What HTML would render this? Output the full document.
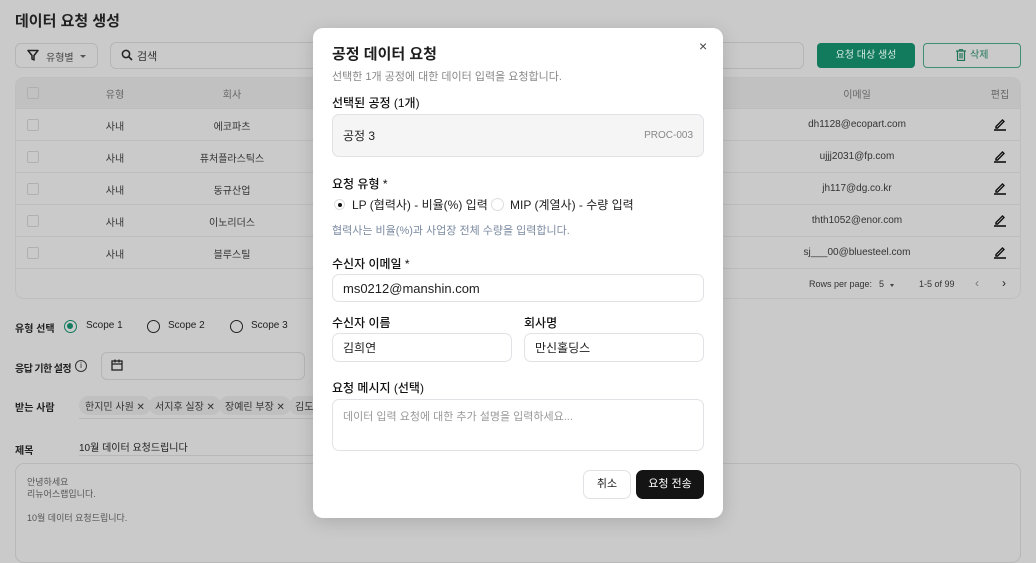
<!DOCTYPE html>
<html style="background:#cacaca"><head><meta charset="utf-8"><style>
*{box-sizing:border-box;margin:0;padding:0}
body{width:1036px;height:547px;overflow:hidden;background:#cacaca;font-family:"Liberation Sans","Noto Sans CJK KR",sans-serif;color:#1e1e1e;position:relative}
.a{position:absolute}
.t{white-space:nowrap}
.box{border:1px solid #b5b5b5;border-radius:6px}
.cb{width:12px;height:12px;border:1px solid #b0b0b0;border-radius:2px;position:absolute;left:27px}
.cell{position:absolute;font-size:10px;color:#333;transform:translateX(-50%);white-space:nowrap}
.rl{position:absolute;left:15px;width:1005px;height:1px;background:#bdbdbd}
.lbl{font-size:12px;font-weight:bold;color:#222}
.modal{position:absolute;left:313px;top:28px;width:410px;height:490px;background:#fff;border-radius:10px;box-shadow:0 4px 18px rgba(0,0,0,.15)}
.m{position:absolute;white-space:nowrap}
.inp{position:absolute;border:1px solid #e2e2e6;border-radius:7px;background:#fff;font-size:13px;padding-left:10px;display:flex;align-items:center}
.ml{font-size:12px;font-weight:500;color:#111}
.chip{position:absolute;top:396px;height:19px;background:#c0c0c0;border-radius:10px;font-size:10px;color:#333;padding:2px 6px;white-space:nowrap}
.pen{position:absolute;left:993px}
</style></head><body>
<div class="a t" style="left:15px;top:10px;font-size:15px;font-weight:bold;color:#222">데이터 요청 생성</div>
<div class="a box" style="left:15px;top:43px;width:83px;height:25px"></div>
<svg class="a" style="left:27px;top:49px" width="12" height="12" viewBox="0 0 12 12"><path d="M1 1.5h10L7 6.5V11L5 10V6.5z" fill="none" stroke="#222" stroke-width="1.5" stroke-linejoin="round"/></svg>
<div class="a t" style="left:46px;top:49px;font-size:10px;color:#444">유형별</div>
<div class="a" style="left:80px;top:55px;border:3px solid transparent;border-top:3px solid #555"></div>
<div class="a box" style="left:110px;top:42px;width:694px;height:27px"></div>
<svg class="a" style="left:121px;top:49px" width="12" height="12" viewBox="0 0 12 12"><circle cx="5" cy="5" r="3.6" fill="none" stroke="#222" stroke-width="1.5"/><path d="M7.7 7.7L11 11" stroke="#222" stroke-width="1.6"/></svg>
<div class="a t" style="left:137px;top:48px;font-size:11px;color:#333">검색</div>
<div class="a" style="left:817px;top:43px;width:98px;height:25px;background:#127a5d;border-radius:4px;color:#d8ebe3;font-size:10px;text-align:center;line-height:25px">요청 대상 생성</div>
<div class="a" style="left:923px;top:43px;width:98px;height:25px;border:1px solid #3f8f74;border-radius:4px;color:#1f7558;font-size:10px;line-height:23px;padding-left:46px">삭제</div>
<svg class="a" style="left:956px;top:49px" width="10" height="12" viewBox="0 0 10 12"><path d="M0 2h10M3.5 2V.7h3V2M1.5 2.5v9h7v-9M4 4v5.5M6 4v5.5" fill="none" stroke="#1f7558" stroke-width="1.2"/></svg>
<div class="a" style="left:15px;top:77px;width:1006px;height:222px;border:1px solid #bfbfbf;border-radius:9px;overflow:hidden">
<div style="height:31px;background:#c1c1c1"></div></div>
<div class="cb" style="top:87px"></div>
<div class="cell" style="left:115px;top:86px;color:#666">유형</div>
<div class="cell" style="left:232px;top:86px;color:#666">회사</div>
<div class="cell" style="left:857px;top:86px;color:#666">이메일</div>
<div class="cell" style="left:1000px;top:86px;color:#666">편집</div>
<div class="rl" style="top:108px"></div><div class="rl" style="top:140px"></div><div class="rl" style="top:172px"></div><div class="rl" style="top:204px"></div><div class="rl" style="top:236px"></div><div class="rl" style="top:268px"></div>
<div class="cb" style="top:119px"></div><div class="cell" style="left:115px;top:118px">사내</div><div class="cell" style="left:232px;top:118px">에코파츠</div><div class="cell" style="left:857px;top:119px">dh1128@ecopart.com</div>
<div class="cb" style="top:151px"></div><div class="cell" style="left:115px;top:150px">사내</div><div class="cell" style="left:232px;top:150px">퓨처플라스틱스</div><div class="cell" style="left:857px;top:151px">ujjj2031@fp.com</div>
<div class="cb" style="top:183px"></div><div class="cell" style="left:115px;top:182px">사내</div><div class="cell" style="left:232px;top:182px">동규산업</div><div class="cell" style="left:857px;top:183px">jh117@dg.co.kr</div>
<div class="cb" style="top:215px"></div><div class="cell" style="left:115px;top:214px">사내</div><div class="cell" style="left:232px;top:214px">이노리더스</div><div class="cell" style="left:857px;top:215px">thth1052@enor.com</div>
<div class="cb" style="top:247px"></div><div class="cell" style="left:115px;top:246px">사내</div><div class="cell" style="left:232px;top:246px">블루스틸</div><div class="cell" style="left:857px;top:247px">sj___00@bluesteel.com</div>
<svg class="pen" style="top:117px" width="14" height="14" viewBox="0 0 14 14"><path d="M3 9.5L9.5 3l1.5 1.5L4.5 11H3z" fill="none" stroke="#111" stroke-width="1.4"/><path d="M1 13h12" stroke="#111" stroke-width="1.6"/></svg>
<svg class="pen" style="top:149px" width="14" height="14" viewBox="0 0 14 14"><path d="M3 9.5L9.5 3l1.5 1.5L4.5 11H3z" fill="none" stroke="#111" stroke-width="1.4"/><path d="M1 13h12" stroke="#111" stroke-width="1.6"/></svg>
<svg class="pen" style="top:181px" width="14" height="14" viewBox="0 0 14 14"><path d="M3 9.5L9.5 3l1.5 1.5L4.5 11H3z" fill="none" stroke="#111" stroke-width="1.4"/><path d="M1 13h12" stroke="#111" stroke-width="1.6"/></svg>
<svg class="pen" style="top:213px" width="14" height="14" viewBox="0 0 14 14"><path d="M3 9.5L9.5 3l1.5 1.5L4.5 11H3z" fill="none" stroke="#111" stroke-width="1.4"/><path d="M1 13h12" stroke="#111" stroke-width="1.6"/></svg>
<svg class="pen" style="top:245px" width="14" height="14" viewBox="0 0 14 14"><path d="M3 9.5L9.5 3l1.5 1.5L4.5 11H3z" fill="none" stroke="#111" stroke-width="1.4"/><path d="M1 13h12" stroke="#111" stroke-width="1.6"/></svg>
<div class="a t" style="left:809px;top:279px;font-size:9px;color:#333">Rows per page:</div>
<div class="a t" style="left:879px;top:279px;font-size:9px;color:#333">5</div>
<div class="a" style="left:890px;top:284px;border:2.5px solid transparent;border-top:3px solid #444"></div>
<div class="a t" style="left:919px;top:279px;font-size:9px;color:#333">1-5 of 99</div>
<div class="a t" style="left:975px;top:276px;font-size:12px;color:#777">‹</div>
<div class="a t" style="left:1002px;top:276px;font-size:12px;color:#222">›</div>
<div class="a t lbl" style="left:15px;top:320px;font-size:10px">유형 선택</div>
<div class="a" style="left:64px;top:320px;width:13px;height:13px;border:1.5px solid #127a5d;border-radius:50%"><div style="margin:2px;width:6px;height:6px;border-radius:50%;background:#127a5d"></div></div>
<div class="a t" style="left:86px;top:320px;font-size:10px">Scope 1</div>
<div class="a" style="left:147px;top:320px;width:13px;height:13px;border:1.5px solid #222;border-radius:50%"></div>
<div class="a t" style="left:168px;top:320px;font-size:10px">Scope 2</div>
<div class="a" style="left:230px;top:320px;width:13px;height:13px;border:1.5px solid #222;border-radius:50%"></div>
<div class="a t" style="left:251px;top:320px;font-size:10px">Scope 3</div>
<div class="a t lbl" style="left:15px;top:360px;font-size:10px;letter-spacing:-0.6px">응답 기한 설정</div>
<div class="a" style="left:75px;top:360px;width:12px;height:12px;border:1px solid #333;border-radius:50%;font-size:8px;text-align:center;line-height:10px">i</div>
<div class="a box" style="left:101px;top:352px;width:204px;height:28px"></div>
<svg class="a" style="left:111px;top:359px" width="12" height="12" viewBox="0 0 12 12"><rect x="1" y="2" width="10" height="9" fill="none" stroke="#222" stroke-width="1.3"/><path d="M1 5h10M4 0.5v3M8 0.5v3" stroke="#222" stroke-width="1.3"/></svg>
<div class="a t lbl" style="left:15px;top:399px;font-size:10px">받는 사람</div>
<div class="chip" style="left:79px">한지민 사원 ✕</div>
<div class="chip" style="left:149px">서지후 실장 ✕</div>
<div class="chip" style="left:219px">장예린 부장 ✕</div>
<div class="chip" style="left:289px">김도</div>
<div class="a" style="left:79px;top:418px;width:240px;height:1px;background:#b8b8b8"></div>
<div class="a t lbl" style="left:15px;top:442px;font-size:10px">제목</div>
<div class="a t" style="left:79px;top:439px;font-size:10px">10월 데이터 요청드립니다</div>
<div class="a" style="left:79px;top:455px;width:240px;height:1px;background:#b8b8b8"></div>
<div class="a" style="left:15px;top:463px;width:1006px;height:100px;border:1px solid #b8b8b8;border-radius:9px"></div>
<div class="a" style="left:27px;top:476px;font-size:9px;color:#555;line-height:12px">안녕하세요<br>리뉴어스랩입니다.<br><br>10월 데이터 요청드립니다.</div>
<div class="modal">
<div class="m" style="left:19px;top:15px;font-size:15px;font-weight:bold">공정 데이터 요청</div>
<div class="m" style="left:386px;top:10px;font-size:14px;color:#444">×</div>
<div class="m" style="left:19px;top:40px;font-size:11px;color:#888">선택한 1개 공정에 대한 데이터 입력을 요청합니다.</div>
<div class="m ml" style="left:19px;top:66px">선택된 공정 (1개)</div>
<div class="inp" style="left:19px;top:86px;width:372px;height:43px;background:#f5f5f6;font-size:12px">공정 3<span style="position:absolute;right:10px;font-size:10px;color:#888">PROC-003</span></div>
<div class="m ml" style="left:19px;top:147px">요청 유형 *</div>
<div class="m" style="left:21px;top:171px;width:11px;height:11px;border-radius:50%;border:1px solid #ddd"><div style="margin:2.5px;width:4px;height:4px;border-radius:50%;background:#111"></div></div>
<div class="m" style="left:39px;top:168px;font-size:12px">LP (협력사) - 비율(%) 입력</div>
<div class="m" style="left:178px;top:170px;width:13px;height:13px;border-radius:50%;border:1px solid #ddd"></div>
<div class="m" style="left:197px;top:168px;font-size:12px">MIP (계열사) - 수량 입력</div>
<div class="m" style="left:19px;top:194px;font-size:11px;color:#7a8aa0">협력사는 비율(%)과 사업장 전체 수량을 입력합니다.</div>
<div class="m ml" style="left:19px;top:227px">수신자 이메일 *</div>
<div class="inp" style="left:19px;top:246px;width:372px;height:28px">ms0212@manshin.com</div>
<div class="m ml" style="left:19px;top:286px">수신자 이름</div>
<div class="m ml" style="left:211px;top:286px">회사명</div>
<div class="inp" style="left:19px;top:305px;width:180px;height:29px;font-size:12px">김희연</div>
<div class="inp" style="left:211px;top:305px;width:180px;height:29px;font-size:12px">만신홀딩스</div>
<div class="m ml" style="left:19px;top:351px">요청 메시지 (선택)</div>
<div class="inp" style="left:19px;top:371px;width:372px;height:52px;align-items:flex-start;padding-top:8px;font-size:11px;color:#999">데이터 입력 요청에 대한 추가 설명을 입력하세요...</div>
<div class="m" style="left:270px;top:442px;width:48px;height:29px;border:1px solid #e2e2e6;border-radius:7px;font-size:11px;text-align:center;line-height:27px">취소</div>
<div class="m" style="left:323px;top:442px;width:68px;height:29px;background:#141414;border-radius:7px;font-size:11px;color:#fff;text-align:center;line-height:29px">요청 전송</div>
</div>
</body></html>
